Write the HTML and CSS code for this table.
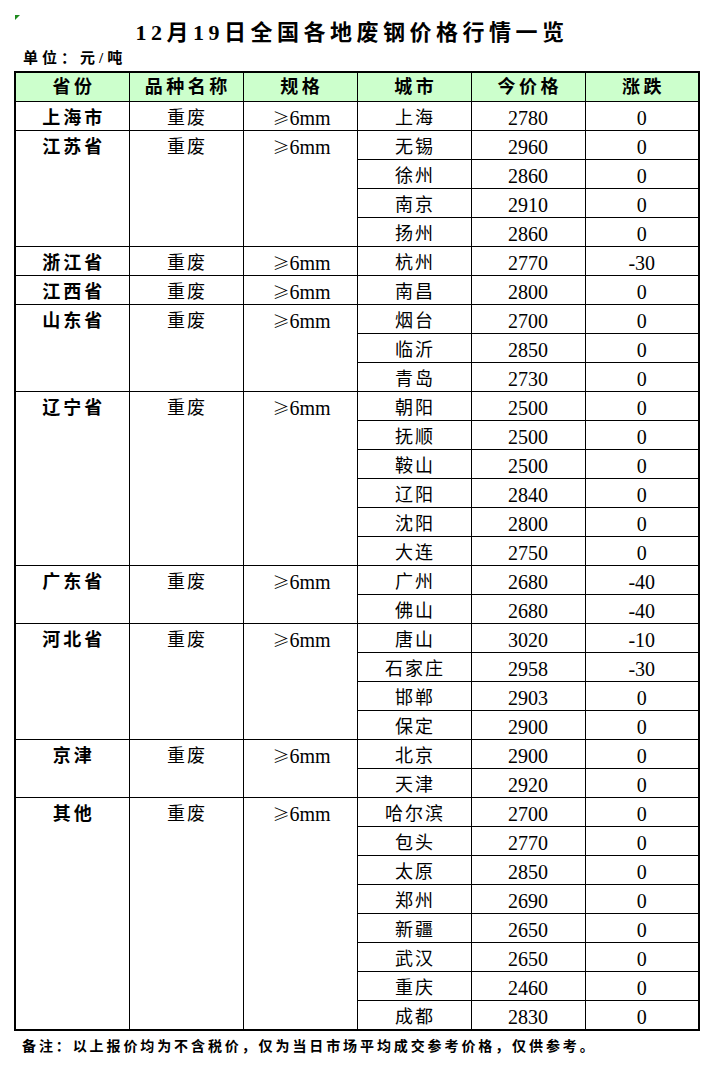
FILE: index.html
```html
<!DOCTYPE html>
<html lang="zh-CN">
<head>
<meta charset="utf-8">
<title>12月19日全国各地废钢价格行情一览</title>
<link rel="stylesheet" href="styles.css">
</head>
<body>
<div class="sheet">
  <div class="marker"></div>
  <h1 class="title">12月19日全国各地废钢价格行情一览</h1>
  <div class="unit">单位：元/吨</div>
  <table class="prices">
    <thead>
      <tr><th>省份</th><th>品种名称</th><th>规格</th><th>城市</th><th>今价格</th><th>涨跌</th></tr>
    </thead>
    <tbody>
      <tr><td class="prov">上海市</td><td class="kind">重废</td><td class="spec"><span class="ge">≥</span>6mm</td><td class="city">上海</td><td class="num">2780</td><td class="num">0</td></tr>

      <tr><td class="prov" rowspan="4">江苏省</td><td class="kind" rowspan="4">重废</td><td class="spec" rowspan="4"><span class="ge">≥</span>6mm</td><td class="city">无锡</td><td class="num">2960</td><td class="num">0</td></tr>
      <tr><td class="city">徐州</td><td class="num">2860</td><td class="num">0</td></tr>
      <tr><td class="city">南京</td><td class="num">2910</td><td class="num">0</td></tr>
      <tr><td class="city">扬州</td><td class="num">2860</td><td class="num">0</td></tr>

      <tr><td class="prov">浙江省</td><td class="kind">重废</td><td class="spec"><span class="ge">≥</span>6mm</td><td class="city">杭州</td><td class="num">2770</td><td class="num">-30</td></tr>

      <tr><td class="prov">江西省</td><td class="kind">重废</td><td class="spec"><span class="ge">≥</span>6mm</td><td class="city">南昌</td><td class="num">2800</td><td class="num">0</td></tr>

      <tr><td class="prov" rowspan="3">山东省</td><td class="kind" rowspan="3">重废</td><td class="spec" rowspan="3"><span class="ge">≥</span>6mm</td><td class="city">烟台</td><td class="num">2700</td><td class="num">0</td></tr>
      <tr><td class="city">临沂</td><td class="num">2850</td><td class="num">0</td></tr>
      <tr><td class="city">青岛</td><td class="num">2730</td><td class="num">0</td></tr>

      <tr><td class="prov" rowspan="6">辽宁省</td><td class="kind" rowspan="6">重废</td><td class="spec" rowspan="6"><span class="ge">≥</span>6mm</td><td class="city">朝阳</td><td class="num">2500</td><td class="num">0</td></tr>
      <tr><td class="city">抚顺</td><td class="num">2500</td><td class="num">0</td></tr>
      <tr><td class="city">鞍山</td><td class="num">2500</td><td class="num">0</td></tr>
      <tr><td class="city">辽阳</td><td class="num">2840</td><td class="num">0</td></tr>
      <tr><td class="city">沈阳</td><td class="num">2800</td><td class="num">0</td></tr>
      <tr><td class="city">大连</td><td class="num">2750</td><td class="num">0</td></tr>

      <tr><td class="prov" rowspan="2">广东省</td><td class="kind" rowspan="2">重废</td><td class="spec" rowspan="2"><span class="ge">≥</span>6mm</td><td class="city">广州</td><td class="num">2680</td><td class="num">-40</td></tr>
      <tr><td class="city">佛山</td><td class="num">2680</td><td class="num">-40</td></tr>

      <tr><td class="prov" rowspan="4">河北省</td><td class="kind" rowspan="4">重废</td><td class="spec" rowspan="4"><span class="ge">≥</span>6mm</td><td class="city">唐山</td><td class="num">3020</td><td class="num">-10</td></tr>
      <tr><td class="city">石家庄</td><td class="num">2958</td><td class="num">-30</td></tr>
      <tr><td class="city">邯郸</td><td class="num">2903</td><td class="num">0</td></tr>
      <tr><td class="city">保定</td><td class="num">2900</td><td class="num">0</td></tr>

      <tr><td class="prov" rowspan="2">京津</td><td class="kind" rowspan="2">重废</td><td class="spec" rowspan="2"><span class="ge">≥</span>6mm</td><td class="city">北京</td><td class="num">2900</td><td class="num">0</td></tr>
      <tr><td class="city">天津</td><td class="num">2920</td><td class="num">0</td></tr>

      <tr><td class="prov" rowspan="8">其他</td><td class="kind" rowspan="8">重废</td><td class="spec" rowspan="8"><span class="ge">≥</span>6mm</td><td class="city">哈尔滨</td><td class="num">2700</td><td class="num">0</td></tr>
      <tr><td class="city">包头</td><td class="num">2770</td><td class="num">0</td></tr>
      <tr><td class="city">太原</td><td class="num">2850</td><td class="num">0</td></tr>
      <tr><td class="city">郑州</td><td class="num">2690</td><td class="num">0</td></tr>
      <tr><td class="city">新疆</td><td class="num">2650</td><td class="num">0</td></tr>
      <tr><td class="city">武汉</td><td class="num">2650</td><td class="num">0</td></tr>
      <tr><td class="city">重庆</td><td class="num">2460</td><td class="num">0</td></tr>
      <tr><td class="city">成都</td><td class="num">2830</td><td class="num">0</td></tr>
    </tbody>
  </table>
  <p class="note">备注：以上报价均为不含税价，仅为当日市场平均成交参考价格，仅供参考。</p>
</div>
</body>
</html>
```

FILE: styles.css
```css
html, body {
  margin: 0;
  padding: 0;
  background: #ffffff;
}

body {
  font-family: "Liberation Serif", "Noto Sans CJK SC", serif;
  color: #000000;
}

.sheet {
  width: 686px;
  padding: 15px 20px 0 14px;
}

.marker {
  width: 0;
  height: 0;
  margin-left: 1px;
  border-top: 5px solid #1f8b1f;
  border-right: 5px solid transparent;
}

.title {
  margin: 0;
  padding-right: 10px;
  font-size: 22px;
  line-height: 26px;
  font-weight: bold;
  letter-spacing: 4.5px;
  text-align: center;
}

.unit {
  padding-left: 9px;
  font-size: 15px;
  line-height: 25px;
  font-weight: bold;
  letter-spacing: 4px;
}

.prices {
  width: 686px;
  table-layout: fixed;
  border-collapse: collapse;
  border: 2px solid #000000;
}

.prices tr {
  height: 29px;
}

.prices th,
.prices td {
  border: 1px solid #000000;
  padding: 0;
  text-align: center;
  white-space: nowrap;
}

.prices th {
  background: #ccffcc;
  font-size: 18px;
  font-weight: bold;
  letter-spacing: 3.5px;
  padding-left: 3.5px;
  line-height: 26px;
  vertical-align: middle;
}

.prices td {
  vertical-align: top;
  padding-top: 4px;
  line-height: 24px;
  font-size: 18px;
}

.prices td.prov {
  font-weight: bold;
  letter-spacing: 3px;
  padding-left: 3px;
}

.prices td.kind,
.prices td.city {
  letter-spacing: 2px;
  padding-left: 2px;
}

.prices td.spec,
.prices td.num {
  font-size: 20px;
}

.prices td.spec {
  padding-left: 3px;
}

.ge {
  font-family: "Noto Sans CJK SC", sans-serif;
  font-size: 17px;
  font-weight: 300;
}

.note {
  margin: 6px 0 0 0;
  padding-left: 8px;
  font-size: 14px;
  line-height: 20px;
  font-weight: bold;
  letter-spacing: 2.9px;
}
```
